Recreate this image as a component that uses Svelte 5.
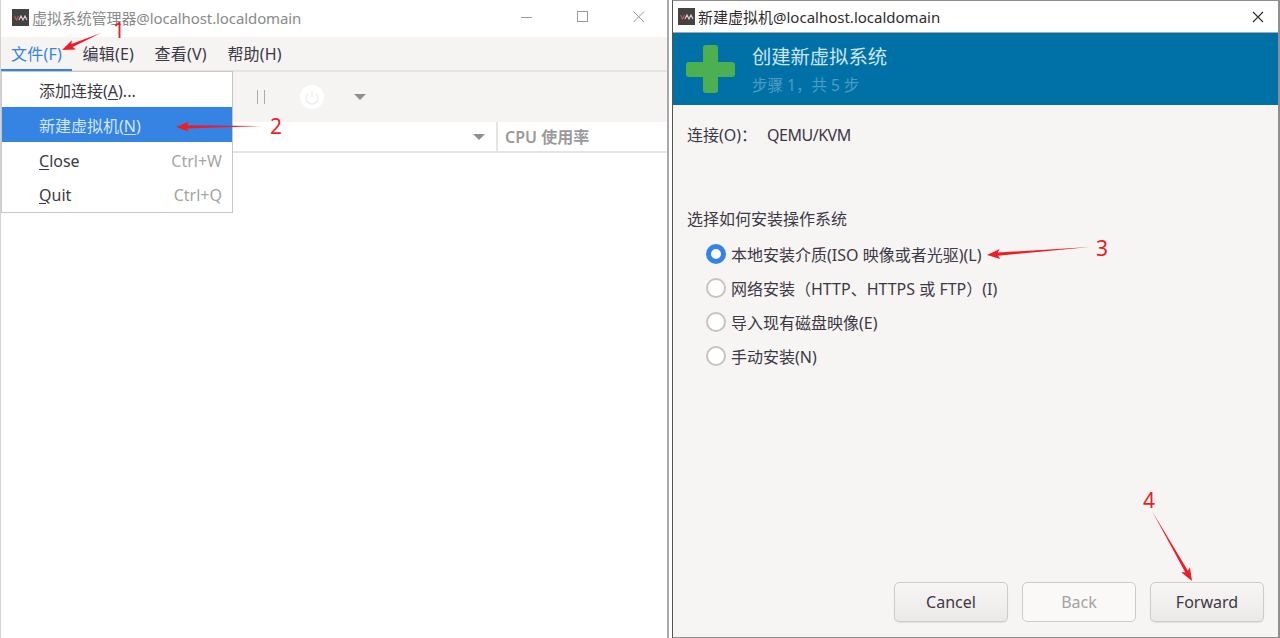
<script>
  const menus = ['文件(F)', '编辑(E)', '查看(V)', '帮助(H)'];
  const options = ['本地安装介质(ISO 映像或者光驱)(L)', '网络安装（HTTP、HTTPS 或 FTP）(I)', '导入现有磁盘映像(E)', '手动安装(N)'];

  // red callouts drawn over the screenshot
  const arrows = [
    { from: [101, 33], to: [62, 50], n: '1', at: [119, 38] },
    { from: [262, 126], to: [176, 127], n: '2', at: [276, 134] },
    { from: [1090, 247], to: [987, 255], n: '3', at: [1102, 256] },
    { from: [1152, 511], to: [1192, 581], n: '4', at: [1149, 508] }
  ];

  function arrowPoints(a) {
    const dx = a.to[0] - a.from[0];
    const dy = a.to[1] - a.from[1];
    const len = Math.hypot(dx, dy);
    const ux = dx / len, uy = dy / len;
    const nx = -uy, ny = ux;
    const p = (along, side) => {
      const x = a.to[0] - ux * along + nx * side;
      const y = a.to[1] - uy * along + ny * side;
      return x.toFixed(1) + ',' + y.toFixed(1);
    };
    return [a.from.join(','), p(11, 1.6), p(13, 5), a.to.join(','), p(13, -5), p(11, -1.6)].join(' ');
  }
</script>

{#snippet vmLogo()}
  <svg class="logo" viewBox="0 0 17 17" width="17" height="17">
    <rect width="17" height="17" fill="#454342" />
    <polyline points="2.5,7 4.5,11 6.5,7" fill="none" stroke="#d9534f" stroke-width="1.1" />
    <polyline points="7,11 9,7 11,11 13,7 15,11" fill="none" stroke="#d8d8d8" stroke-width="1.1" />
  </svg>
{/snippet}

<div class="screen">
  <section class="win manager">
    <header class="titlebar">
      {@render vmLogo()}
      <span class="title">虚拟系统管理器@localhost.localdomain</span>
      <div class="controls">
        <svg width="14" height="14" viewBox="0 0 14 14"><path d="M1 7.5h11" stroke="#999" fill="none" /></svg>
        <svg width="14" height="14" viewBox="0 0 14 14"><rect x="1.5" y="1.5" width="10" height="10" stroke="#999" fill="none" /></svg>
        <svg width="14" height="14" viewBox="0 0 14 14"><path d="M1.5 1.5l10.5 10.5M12 1.5L1.500 12" stroke="#999" fill="none" /></svg>
      </div>
    </header>
    <nav class="menubar">
      {#each menus as m, i}
        <span class="menu" class:open={i === 0}>{m}</span>
      {/each}
    </nav>
    <div class="toolbar">
      <svg class="pause" width="10" height="14" viewBox="0 0 10 14"><path d="M1.500 0v14M8.500 0v14" stroke="#aaa" fill="none" /></svg>
      <svg class="power" width="24" height="24" viewBox="0 0 24 24">
        <circle cx="12" cy="12" r="12" fill="#fff" />
        <path d="M8 8.500a6 6 0 1 0 8 0M12 6v6" stroke="#f0efee" stroke-width="1.500" fill="none" />
      </svg>
      <span class="tri drop"></span>
    </div>
    <div class="columns">
      <div class="col name"><span class="tri"></span></div>
      <div class="col cpu">CPU 使用率</div>
    </div>
    <div class="list"></div>

    <div class="dropdown">
      <div class="item"><span>添加连接(<u>A</u>)...</span></div>
      <div class="item active"><span>新建虚拟机(<u>N</u>)</span></div>
      <div class="item"><span><u>C</u>lose</span><kbd>Ctrl+W</kbd></div>
      <div class="item"><span><u>Q</u>uit</span><kbd>Ctrl+Q</kbd></div>
    </div>
  </section>

  <section class="win wizard">
    <header class="wiz-title">
      {@render vmLogo()}
      <span>新建虚拟机@localhost.localdomain</span>
      <svg class="close" width="12" height="12" viewBox="0 0 12 12"><path d="M1 1l10 10M11 1L1 11" stroke="#333" stroke-width="1.200" fill="none" /></svg>
    </header>
    <div class="banner">
      <svg width="50" height="50" viewBox="0 0 50 50">
        <rect x="17" y="1" width="15" height="48" rx="3" fill="#4caf50" />
        <rect x="0" y="18" width="49" height="15" rx="3" fill="#4caf50" />
      </svg>
      <div class="banner-text">
        <div class="b1">创建新虚拟系统</div>
        <div class="b2">步骤 1，共 5 步</div>
      </div>
    </div>
    <div class="body">
      <div class="conn"><span>连接(O)：</span><span class="kvm">QEMU/KVM</span></div>
      <div class="how">选择如何安装操作系统</div>
      <div class="radios">
        {#each options as o, i}
          <label class="radio">
            <span class="dot" class:on={i === 0}></span>
            <span>{o}</span>
          </label>
        {/each}
      </div>
      <div class="buttons">
        <button>Cancel</button>
        <button disabled>Back</button>
        <button>Forward</button>
      </div>
    </div>
  </section>

  <svg class="notes" width="1280" height="638" viewBox="0 0 1280 638">
    {#each arrows as a}
      <polygon points={arrowPoints(a)} fill="#ee1c25" />
      <text x={a.at[0]} y={a.at[1]} text-anchor="middle">{a.n}</text>
    {/each}
  </svg>
</div>

<style>
  :global(body) {
    background: #fff;
    font-family: "Noto Sans", "Noto Sans CJK SC", sans-serif;
    color: #3d3846;
  }

  .screen {
    position: relative;
    display: flex;
    width: 1280px;
    height: 638px;
    overflow: hidden;
  }

  .win {
    display: flex;
    flex-direction: column;
    box-sizing: border-box;
    height: 638px;
  }

  .manager {
    position: relative;
    width: 669px;
    border-left: 1px solid #d5d3d1;
    border-right: 2px solid #a9a9a9;
    margin-right: 3px;
  }

  .logo {
    flex: none;
  }

  .titlebar {
    display: flex;
    align-items: center;
    box-sizing: border-box;
    height: 37px;
    padding: 0 21px 3px 11px;
    background: #fff;
  }

  .title {
    margin-left: 3px;
    font-size: 15px;
    letter-spacing: -0.1px;
    color: #8a8a8a;
  }

  .controls {
    display: flex;
    gap: 42px;
    margin-left: auto;
  }

  .menubar {
    display: flex;
    height: 35px;
    box-sizing: border-box;
    background: #f5f4f2;
    border-bottom: 2px solid #e6e4e1;
  }

  .menu {
    box-sizing: border-box;
    height: 35px;
    padding: 6px 10px 0;
    margin-right: 0.6px;
    font-size: 16px;
    letter-spacing: 0.2px;
    line-height: 23px;
  }

  .menu.open {
    color: #3584e4;
    border-bottom: 3px solid #3584e4;
  }

  .toolbar {
    position: relative;
    display: flex;
    align-items: center;
    height: 50px;
    padding-left: 255px;
    background: #f5f4f2;
  }

  .power {
    margin-left: 34px;
  }

  .tri {
    display: inline-block;
    width: 0;
    height: 0;
    border-left: 6px solid transparent;
    border-right: 6px solid transparent;
    border-top: 6px solid #8f8f8f;
  }

  .drop {
    margin-left: 30px;
  }

  .columns {
    display: flex;
    height: 31px;
    box-sizing: border-box;
    background: #fff;
    border-bottom: 2px solid #e6e4e1;
  }

  .col.name {
    display: flex;
    align-items: center;
    justify-content: flex-end;
    box-sizing: border-box;
    width: 497px;
    padding-right: 11px;
    border-right: 2px solid #e6e4e1;
  }

  .col.cpu {
    padding-left: 7px;
    font-size: 16px;
    font-weight: 600;
    line-height: 30px;
    color: #9a9a9a;
  }

  .list {
    flex: 1;
    background: #fff;
  }

  .dropdown {
    position: absolute;
    left: 0;
    top: 71px;
    width: 232px;
    box-sizing: border-box;
    background: #fff;
    border: 1px solid #c9c7c5;
    font-size: 16px;
  }

  .item {
    display: flex;
    justify-content: space-between;
    align-items: center;
    height: 35px;
    padding: 0 10px 0 37px;
  }

  .item:last-child {
    height: 34px;
  }

  .item.active {
    background: #3584e4;
    color: #d6e6fa;
    margin-bottom: 1px;
  }

  u {
    text-underline-offset: 2px;
  }

  kbd {
    font-family: inherit;
    color: #a5a5a5;
  }

  .wizard {
    flex: 1;
    border: 1px solid #8f8f8f;
    border-right-width: 2px;
    border-left-color: #555;
    background: #f6f5f4;
  }

  .wiz-title {
    display: flex;
    align-items: center;
    gap: 3px;
    height: 31px;
    padding-left: 5px;
    background: #fff;
    border-bottom: 1px solid #a9a9a9;
    font-size: 15px;
    color: #2e2e2e;
  }

  .close {
    margin-left: auto;
    margin-right: 14px;
  }

  .banner {
    display: flex;
    align-items: center;
    gap: 16px;
    height: 72px;
    padding-left: 13px;
    background: #0071a7;
  }

  .banner-text {
    padding-top: 3px;
  }

  .b1 {
    font-size: 19.300px;
    line-height: 26px;
    color: #cfe6f2;
  }

  .b2 {
    margin-top: 3px;
    font-size: 15.500px;
    line-height: 24px;
    color: #4d9cc4;
  }

  .body {
    flex: 1;
    display: flex;
    flex-direction: column;
    padding: 18px 14px 15px 14px;
    font-size: 16px;
  }

  .conn {
    display: flex;
    gap: 10px;
    line-height: 24px;
    height: 24px;
  }

  .kvm {
    letter-spacing: -0.5px;
  }

  .how {
    margin-top: 60px;
    line-height: 24px;
  }

  .radios {
    display: flex;
    flex-direction: column;
    margin-top: 6px;
    padding-left: 19px;
  }

  .radio {
    display: flex;
    align-items: center;
    gap: 5px;
    height: 34px;
  }

  .dot {
    box-sizing: border-box;
    width: 20px;
    height: 20px;
    border-radius: 50%;
    border: 2px solid #c6c3c0;
    background: #fff;
  }

  .dot.on {
    border: 5px solid #3584e4;
  }

  .buttons {
    display: flex;
    justify-content: flex-end;
    gap: 14px;
    margin-top: auto;
  }

  button {
    width: 114px;
    height: 40px;
    padding: 0;
    font: inherit;
    color: #3d3846;
    background: linear-gradient(#f7f6f5, #ebe9e7);
    border: 1px solid #cfcbc7;
    border-radius: 5px;
    box-shadow: 0 1px 1px rgba(0, 0, 0, 0.08);
  }

  button:disabled {
    background: #faf9f8;
    color: #a3a3a3;
    box-shadow: none;
  }

  .notes {
    position: absolute;
    left: 0;
    top: 0;
    pointer-events: none;
  }

  .notes text {
    font-family: "Noto Sans", sans-serif;
    font-size: 21px;
    fill: #ee1c25;
  }
</style>
